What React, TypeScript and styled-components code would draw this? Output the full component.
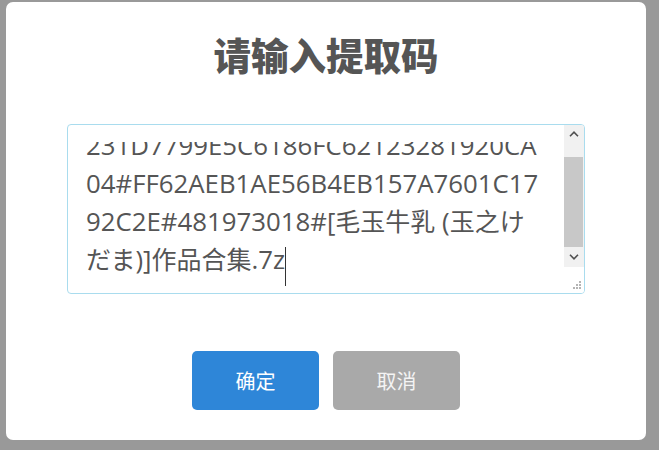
import React from "react";
import styled, { createGlobalStyle } from "styled-components";

const GlobalStyle = createGlobalStyle`
  html, body { margin: 0; padding: 0; background: #999999; }
  body { width: 659px; height: 450px; overflow: hidden; }
`;

const Page = styled.div`
  padding: 2px 0 0 6px;
`;

const Dialog = styled.div`
  width: 640px;
  height: 438px;
  box-sizing: border-box;
  background: #ffffff;
  border-radius: 7px;
  display: flex;
  flex-direction: column;
  align-items: center;
`;

const Title = styled.h1`
  margin: 31px 0 0;
  font-family: "Noto Sans CJK SC", "Noto Sans", sans-serif;
  font-weight: 900;
  font-size: 37.5px;
  line-height: 42px;
  height: 42px;
  color: #555555;
`;

const TextBox = styled.div`
  margin-top: 49px;
  width: 518px;
  height: 170px;
  box-sizing: border-box;
  border: 1px solid #a9dcee;
  border-radius: 4px;
  display: flex;
  overflow: hidden;
  background: #ffffff;
`;

const Viewport = styled.div`
  flex: 1;
  display: flex;
  flex-direction: column;
  padding: 17px 0 0 18px;
`;

const ClipArea = styled.div`
  flex: 1;
  overflow: hidden;
`;

const Content = styled.div`
  margin-top: -16px;
  font-family: "Open Sans", "Noto Sans CJK SC", sans-serif;
  font-size: 25.8px;
  color: #555555;
`;

const Line = styled.div`
  height: 38px;
  line-height: 38px;
  white-space: pre;
`;

const Cjk = styled.span`
  font-family: "Noto Sans CJK SC", "Noto Sans CJK JP", sans-serif;
  font-size: 25px;
  line-height: 0;
`;

const Caret = styled.span`
  display: inline-block;
  width: 0;
  height: 39px;
  border-left: 1px solid #333333;
  vertical-align: -17px;
`;

const ScrollBar = styled.div`
  width: 20px;
  display: flex;
  flex-direction: column;
`;

const ArrowButton = styled.div<{ $h: number }>`
  height: ${(p) => p.$h}px;
  background: #f1f1f1;
  display: flex;
  align-items: center;
  justify-content: center;
`;

const Track = styled.div`
  flex: 1;
  background: #f1f1f1;
  display: flex;
  flex-direction: column;
`;

const Thumb = styled.div<{ $top: number; $size: number }>`
  margin: ${(p) => p.$top}px 1px 0 0;
  height: ${(p) => p.$size}px;
  background: #c8c8c8;
`;

const Corner = styled.div`
  height: 24px;
  background: #ffffff;
  display: flex;
  align-items: flex-end;
  justify-content: flex-end;
  padding: 0 2px 3px 0;
`;

const Actions = styled.div`
  margin-top: 57px;
  display: flex;
  gap: 14px;
`;

const Button = styled.button<{ $primary?: boolean }>`
  width: 127px;
  height: 59px;
  border: none;
  border-radius: 5px;
  background: ${(p) => (p.$primary ? "#2e86d8" : "#a9a9a9")};
  color: ${(p) => (p.$primary ? "#ffffff" : "#f4f4f4")};
  font-family: "Noto Sans CJK SC", sans-serif;
  font-size: 20px;
  cursor: pointer;
`;

const Chevron = ({ up }: { up?: boolean }) => (
  <svg width="10" height="6" viewBox="0 0 10 6">
    <path
      d={up ? "M1 5.2 L5 1.2 L9 5.2" : "M1 0.8 L5 4.8 L9 0.8"}
      fill="none"
      stroke="#505050"
      strokeWidth="1.6"
    />
  </svg>
);

const Grip = () => (
  <svg width="10" height="10" viewBox="0 0 10 10">
    <g fill="#b4b4b4">
      <rect x="7" y="1" width="2" height="2" />
      <rect x="4" y="4" width="2" height="2" />
      <rect x="7" y="4" width="2" height="2" />
      <rect x="1" y="7" width="2" height="2" />
      <rect x="4" y="7" width="2" height="2" />
      <rect x="7" y="7" width="2" height="2" />
    </g>
  </svg>
);

export default function App() {
  return (
    <>
      <GlobalStyle />
      <Page>
        <Dialog>
          <Title>请输入提取码</Title>
          <TextBox>
            <Viewport>
              <ClipArea>
                <Content>
                  <Line>231D7799E5C6186FC62123281920CA</Line>
                  <Line>04#FF62AEB1AE56B4EB157A7601C17</Line>
                  <Line>
                    92C2E#481973018#[<Cjk>毛玉牛乳</Cjk> (<Cjk>玉之け</Cjk>
                  </Line>
                  <Line>
                    <Cjk>だま</Cjk>)]<Cjk>作品合集</Cjk>.7z
                    <Caret />
                  </Line>
                </Content>
              </ClipArea>
            </Viewport>
            <ScrollBar>
              <ArrowButton $h={18}>
                <Chevron up />
              </ArrowButton>
              <Track>
                <Thumb $top={15} $size={90} />
              </Track>
              <ArrowButton $h={20}>
                <Chevron />
              </ArrowButton>
              <Corner>
                <Grip />
              </Corner>
            </ScrollBar>
          </TextBox>
          <Actions>
            <Button $primary>确定</Button>
            <Button>取消</Button>
          </Actions>
        </Dialog>
      </Page>
    </>
  );
}
